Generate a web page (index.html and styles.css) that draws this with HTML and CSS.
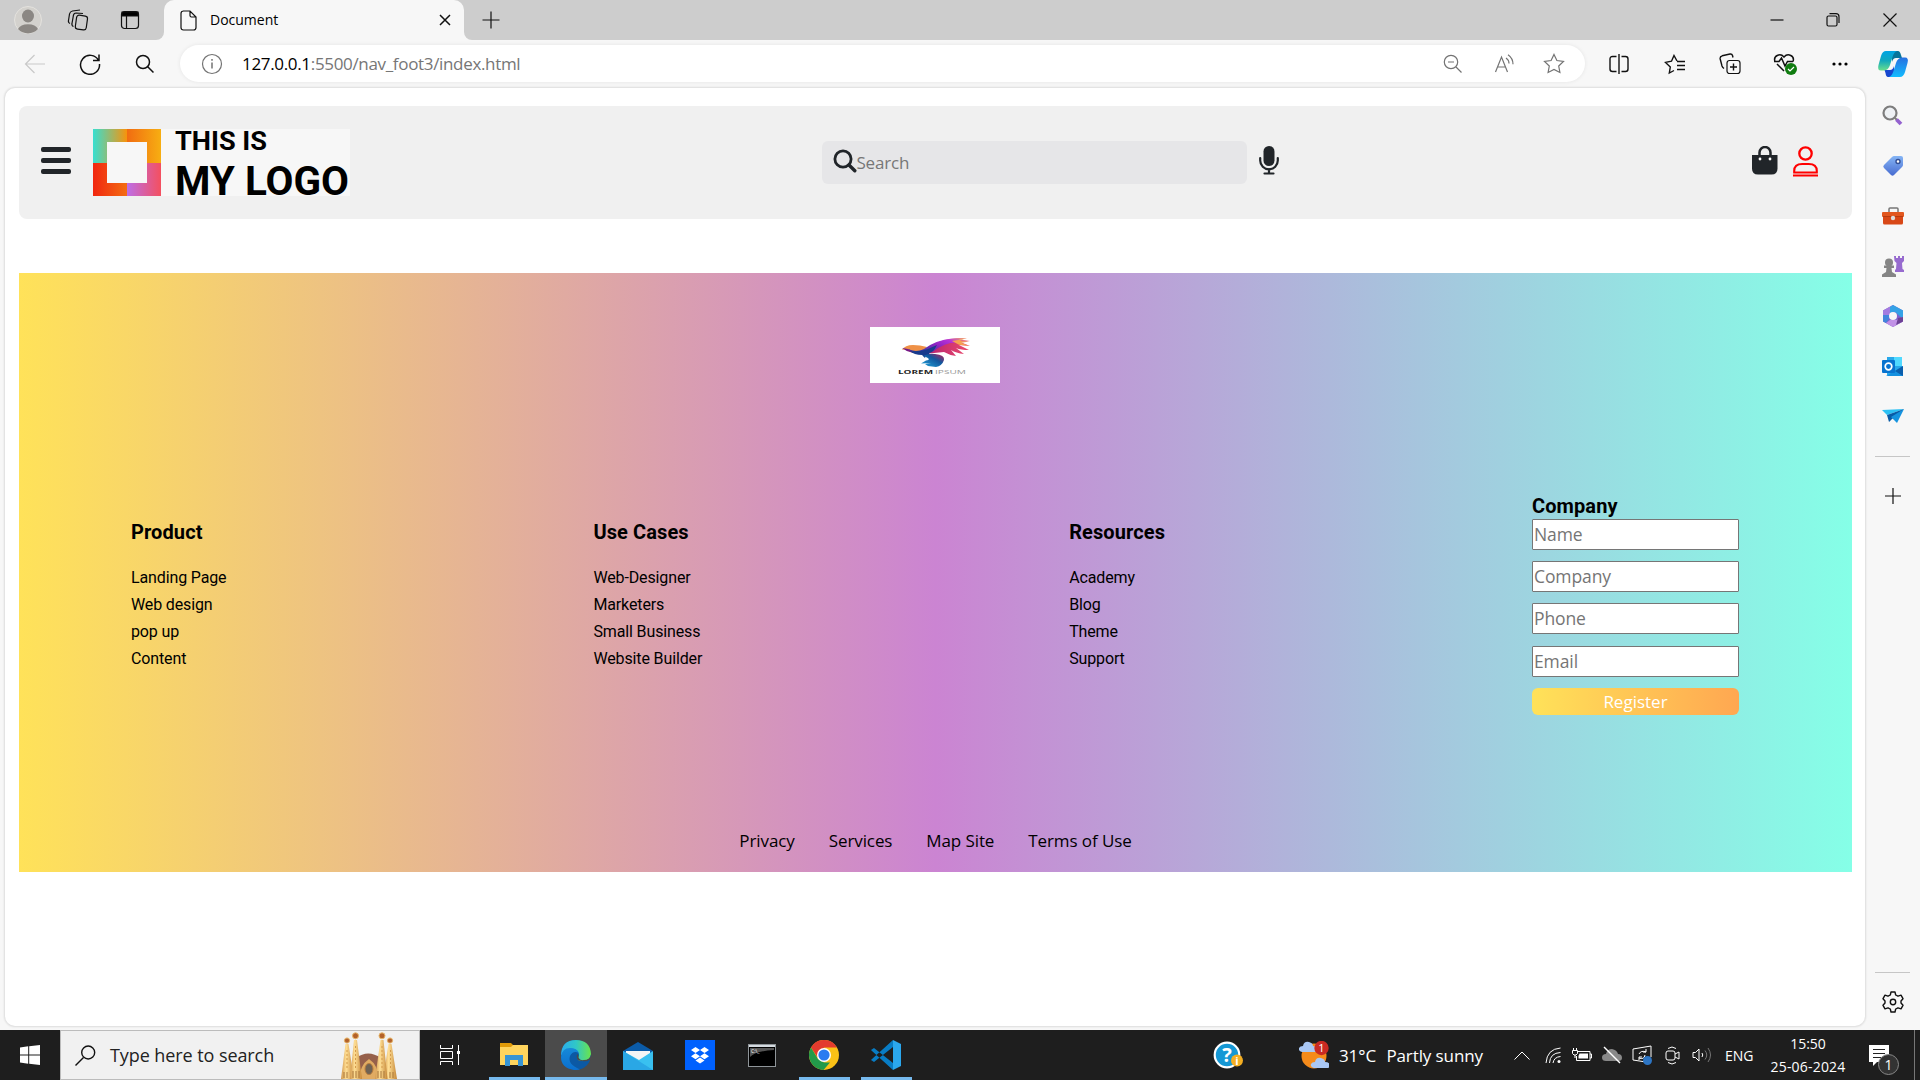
FILE: index.html
```html
<!DOCTYPE html>
<html lang="en">
<head>
<meta charset="utf-8">
<title>Document</title>
<link rel="stylesheet" href="styles.css">
</head>
<body>
<div class="titlebar">
  <div class="title-tools">
    <svg width="28" height="28"><circle cx="14" cy="14" r="13.5" fill="#d3d1cd" stroke="#e4e2de"/><ellipse cx="14" cy="10" rx="6" ry="6.5" fill="#8b8783"/><path d="M4 23a10.500 7 0 0 1 20 0a13.500 13.500 0 0 1-20 0z" fill="#8b8783"/></svg>
    <svg class="line" width="22" height="22" viewBox="0 0 22 22"><rect x="9" y="6.500" width="11" height="14" rx="2.500" transform="rotate(8 14 13)"/><path d="M6.500 17.500q-2-.7-1.500-3L6.500 6Q7 4 9 4l7 .5"/><path d="M3 14.500q-2-.8-1.500-3L2.500 5Q3 2.500 5.500 2L13 1"/></svg>
    <svg class="line" width="20" height="20" viewBox="0 0 20 20"><rect x="1.500" y="1.500" width="17" height="17" rx="3"/><path d="M2 2h16v4H2z" fill="#000"/><path d="M6.500 6v12"/></svg>
  </div>
  <div class="tab">
    <svg class="line" width="17" height="21" viewBox="0 0 17 21"><path d="M3 1h7l6 6v10.500q0 2.500-2.500 2.500h-10Q1 20 1 17.500v-14Q1 1 3.500 1M10 1v4.500Q10 7 11.500 7H16"/></svg>
    <span class="tab-name">Document</span>
    <svg class="line tab-close" width="12" height="12"><path d="M1 1l10 10M11 1L1 11" stroke-width="1.500"/></svg>
  </div>
  <div class="new-tab"><svg class="line" width="18" height="18"><path d="M9 0.500v17M.5 9h17"/></svg></div>
  <div class="window-buttons">
    <svg class="line" width="14" height="14"><path d="M.5 7h13"/></svg>
    <svg class="line" width="14" height="14"><rect x="1" y="3" width="10" height="10" rx="1.500"/><path d="M3.500 .7H10q3 0 3 3V10"/></svg>
    <svg class="line" width="14" height="14"><path d="M.5 .5l13 13M13.500 .5l-13 13"/></svg>
  </div>
</div>

<div class="toolbar">
  <div class="nav-tools">
    <svg class="line faint" width="22" height="20"><path d="M21 10H1.500M10.500 1L1.500 10l9 9"/></svg>
    <svg class="line" width="22" height="22" viewBox="0 0 22 22"><path d="M19.500 7.500A9.500 9.500 0 1 0 20.500 11M20 1.500v6h-6" stroke-width="1.500"/></svg>
    <svg class="line" width="20" height="20" viewBox="0 0 20 20"><circle cx="8" cy="8" r="6.500" stroke-width="1.500"/><path d="M12.500 12.500l6 6" stroke-width="1.500"/></svg>
  </div>
  <div class="address">
    <svg class="line gray info" width="22" height="22"><circle cx="11" cy="11" r="9.500"/><path d="M11 9.500v6M11 6v1.800" stroke-width="1.500"/></svg>
    <span class="url"><b>127.0.0.1</b>:5500/nav_foot3/index.html</span>
    <div class="address-tools">
      <svg class="line gray" width="20" height="20" viewBox="0 0 20 20"><circle cx="8" cy="8" r="6.700"/><path d="M13 13l5.500 5.500M5 8h6"/></svg>
      <svg class="line gray" width="22" height="20" viewBox="0 0 22 20"><path d="M1.500 18L7.500 3l6 15M3.500 13h8M12 4q3 2 3 5.500M14 .8q5 3.500 5 9.500"/></svg>
      <svg class="line gray" width="22" height="21" viewBox="0 0 22 21"><path d="M11 1.500l2.900 6 6.600.9-4.800 4.600 1.200 6.500-5.900-3.100-5.900 3.100L6.300 13 1.500 8.400l6.600-.9z"/></svg>
    </div>
  </div>
  <div class="browser-tools">
    <svg class="line" width="20" height="20" viewBox="0 0 20 20"><path d="M7.500 2.500H3.500Q1 2.500 1 5v10q0 2.500 2.500 2.500h4M12.500 2.500h4Q19 2.500 19 5v10q0 2.500-2.500 2.500h-4M10 0v20" stroke-width="1.400"/></svg>
    <svg class="line" width="22" height="21" viewBox="0 0 22 21"><path d="M13 7L10 1.500 7.500 7.200 1.500 8.400l4.800 4.600-1 6L10 16.500M13 7.500h8M13 11.500h8M13 15.500h8" stroke-width="1.400"/></svg>
    <svg class="line" width="22" height="22" viewBox="0 0 22 22"><rect x="8" y="7.500" width="13" height="13" rx="2.500"/><path d="M14.500 10.500v7M11 14h7M5 15.500Q3.500 14.500 3 13L1.200 6q-.5-2.500 2-3.200L11 1q2-.3 2.500 1.500L14 4.500" stroke-width="1.400"/></svg>
    <svg class="line" width="25" height="24" viewBox="0 0 25 24"><path d="M11 19L4 12M2 9.500C0 4 7 .5 11 5c4-4.500 11-1 9 4.500M1 9.500h5L8.500 6l3.500 8L14.500 9.500H20" stroke-width="1.500"/><circle cx="18" cy="17" r="6" fill="#107c10" stroke="none"/><path d="M15 17l2 2 4-4" stroke="#fff"/></svg>
    <svg width="18" height="6"><circle cx="3" cy="3" r="1.600"/><circle cx="9" cy="3" r="1.600"/><circle cx="15" cy="3" r="1.600"/></svg>
    <svg width="32" height="28" viewBox="0 0 32 28"><defs><linearGradient id="ca" x1="0" y1="0" x2="0" y2="1"><stop stop-color="#00a4e4"/><stop offset=".5" stop-color="#12a9bd"/><stop offset="1" stop-color="#69df8c"/></linearGradient><linearGradient id="cb" x1="0" y1="0" x2="0" y2="1"><stop stop-color="#2870e0"/><stop offset="1" stop-color="#13bcff"/></linearGradient></defs><path d="M15 1h6q2 0 3 4l1 3h-6q-3 0-4 4z" fill="#08759b"/><path d="M17 27h-6q-2 0-2.500-4L7.500 20H13q3 0 4-4z" fill="#1747cf"/><path d="M9 1h11q-3 1-4.500 6L13 15q-1.500 5-6 5.500H4Q0 20.500 1.500 15l2.500-9Q5.500 1 9 1z" fill="url(#ca)"/><path d="M23 27H12q3-1 4.500-6l2.500-8Q20.500 8 25 7.500h3q4 0 2.500 5.500l-2.500 9Q26.500 27 23 27z" fill="url(#cb)"/></svg>
  </div>
</div>

<div class="workspace">
  <main class="page">
    <header class="site-header">
      <div class="brand">
        <div class="menu"><i></i><i></i><i></i></div>
        <div class="logo">
          <div class="mark"><div class="q1"></div><div class="q2"></div><div class="q3"></div><div class="q4"></div></div>
          <svg class="logo-text" width="175" height="67"><text x="0" y="21" font-size="26" textLength="92" lengthAdjust="spacingAndGlyphs">THIS IS</text><text x="0" y="66" font-size="40" textLength="174" lengthAdjust="spacingAndGlyphs">MY LOGO</text></svg>
        </div>
      </div>
      <div class="finder">
        <div class="search">
          <svg width="24" height="24" viewBox="0 0 24 24" fill="none" stroke="#212529" stroke-width="2.800" stroke-linecap="round"><circle cx="10" cy="10" r="8.100"/><path d="M16 16l5.800 5.800" stroke-width="3.400"/></svg>
          <span class="search-hint">Search</span>
        </div>
        <svg width="20" height="29" viewBox="0 0 20 29"><rect x="4.500" y="0" width="11" height="20" rx="5.500" fill="#212529"/><path d="M1.200 12v2.500a8.800 8.800 0 0 0 17.600 0V12M10 23v4M5.500 27.500h9" fill="none" stroke="#212529" stroke-width="2.200" stroke-linecap="round"/></svg>
      </div>
      <div class="account">
        <svg width="26" height="29" viewBox="0 0 26 29"><path d="M7.500 10V6.500a5.500 5.500 0 0 1 11 0V10" fill="none" stroke="#212529" stroke-width="2.500"/><path d="M0 9h25.500v13.500q0 6-6 6H6q-6 0-6-6z" fill="#212529"/><circle cx="8" cy="13" r="1.400" fill="#fff"/><circle cx="18" cy="13" r="1.400" fill="#fff"/></svg>
        <svg width="25" height="31" viewBox="0 0 25 31" fill="none" stroke="#f00" stroke-width="2.300"><circle cx="12.500" cy="7.500" r="6.200"/><path d="M1.200 26.500V25q0-7 8-7h6.600q8 0 8 7v1.500zM0 29.500h25" stroke-width="2.100"/></svg>
      </div>
    </header>

    <footer class="site-footer">
      <div class="bird">
        <svg width="130" height="56" viewBox="0 0 130 56">
          <defs>
            <linearGradient id="wing" x1="0" y1=".6" x2="1" y2="0"><stop stop-color="#2a3fa0"/><stop offset=".4" stop-color="#8a22c0"/><stop offset=".7" stop-color="#b832d8"/><stop offset="1" stop-color="#ffc04f"/></linearGradient>
            <linearGradient id="under"><stop stop-color="#64158c"/><stop offset=".4" stop-color="#b82370"/><stop offset="1" stop-color="#ec4b6c"/></linearGradient>
            <linearGradient id="tail" x1="0" y1="1" x2="1" y2="0"><stop stop-color="#22a7dd"/><stop offset=".6" stop-color="#11569d"/><stop offset="1" stop-color="#c31d55"/></linearGradient>
          </defs>
          <path d="M32 23q3-5 11-5 7 0 14 2l-5 6q-10 1-14-3-4-1-6 0z" fill="#ef9147"/>
          <path d="M38 22q8 4 16 1Q68 13 82 12q7-1 15-.5-7 .5-9 1.500 6 0 12 1-5 1-10 1l10 4-11-1 10 5q-8 0-13-2l8 6q-8-1-13-4l5 6q-7-1-12-4l-10 1q-22 3-32-5z" fill="url(#under)"/>
          <path d="M38 22q8 4 16 0Q66 13 82 11.500q7-1 15 0-8 1-10 2 6 0 11 1-6 1-12 1-11 0-23 9-15 5-25-2.500z" fill="url(#wing)"/>
          <path d="M82 14l12-2-4 2 8 .8-7 1 8 3-10-1z" fill="#f6a24f"/>
          <path d="M40 24q10 1 18-2l9-4q-4 8-8 8l2 4-5-2-1 3-3-3q-8 0-12-4z" fill="#193b8c"/>
          <path d="M53 29q6-3 12-2 10 1 9 6-2 6-8 7l-8-1-3-2 6-1-10 .5 5-3q7-1-3-4.500z" fill="url(#tail)"/>
          <text x="28" y="46.500" font-size="5" font-weight="700" fill="#222" textLength="35" lengthAdjust="spacingAndGlyphs">LOREM</text><text x="65" y="46.500" font-size="5" fill="#999" textLength="31" lengthAdjust="spacingAndGlyphs">IPSUM</text>
        </svg>
      </div>
      <div class="columns">
        <section class="links"><h3>Product</h3><a>Landing Page</a><a>Web design</a><a>pop up</a><a>Content</a></section>
        <section class="links"><h3>Use Cases</h3><a>Web-Designer</a><a>Marketers</a><a>Small Business</a><a>Website Builder</a></section>
        <section class="links"><h3>Resources</h3><a>Academy</a><a>Blog</a><a>Theme</a><a>Support</a></section>
        <form class="signup"><h3>Company</h3><input placeholder="Name"><input placeholder="Company"><input placeholder="Phone"><input placeholder="Email"><button type="button">Register</button></form>
      </div>
      <nav class="legal"><a>Privacy</a><a>Services</a><a>Map Site</a><a>Terms of Use</a></nav>
    </footer>
  </main>

  <aside class="sidebar">
    <div class="apps">
      <svg width="22" height="22" viewBox="0 0 22 22"><circle cx="8" cy="8" r="6.500" fill="#eef1f4" stroke="#7d7d7d" stroke-width="2.200"/><path d="M13 13l2 2" stroke="#7d7d7d" stroke-width="2"/><path d="M14.500 14.500l4.500 4.500" stroke="#9462cf" stroke-width="3.800"/></svg>
      <svg width="22" height="22" viewBox="0 0 22 22"><defs><linearGradient id="tg" x1="0" y1="0" x2="0" y2="1"><stop stop-color="#85b5f5"/><stop offset="1" stop-color="#476bd0"/></linearGradient></defs><path d="M12 1h7q2 0 2 2v7q0 1-1 2l-8 8q-1.500 1.500-3 0l-7-7q-1.500-1.500 0-3l8-8q1-1 2-1z" fill="url(#tg)"/><circle cx="16" cy="6.500" r="2" fill="#fff" stroke="#344f94" stroke-width="1.400"/></svg>
      <svg width="22" height="18" viewBox="0 0 22 18"><path d="M7 6V2q0-1 1-1h7q1 0 1 1v4" fill="none" stroke="#777" stroke-width="1.500"/><rect x="1" y="8" width="20" height="9.500" rx="1.500" fill="#d84817"/><rect y="5" width="22" height="5" rx="1" fill="#e2571f"/><path d="M1 9h20v1H1z" fill="#b73b10"/><circle cx="11" cy="11" r="2.200" fill="#ddd"/></svg>
      <svg width="22" height="23" viewBox="0 0 22 23"><path d="M12 1h2v2h2V1h2v2h2V1h2v5l-2 2 .5 6 1.500 1v2h-9v-2l1-1 .5-6-2-2z" fill="#976bcf"/><g fill="#858585"><circle cx="7" cy="7.500" r="4"/><path d="M2 10.500h10V13H9.500l.5 4 4 2.500V22H0v-2.500L4 17l.5-4H2z"/></g></svg>
      <svg width="22" height="22" viewBox="0 0 22 22"><path d="M11 0L1 5.500v11L11 22l10-5.500v-11z" fill="#7d62cf"/><path d="M11 0L1 5.500V11l6 0 1.500-4L14 6z" fill="#a37be0"/><path d="M11 0L8 2v6l5-1 8 7V5.500z" fill="#35a2e6"/><path d="M1 10l6 0v4l-3 4-3-1.500z" fill="#4385dc"/><path d="M4 18l4-3h6l7-3v4.500L11 22z" fill="#c191e6"/><path d="M21 12v4.500L14 20l2-7z" fill="#6d4295"/><circle cx="11" cy="11" r="4" fill="#f7f7f7"/></svg>
      <svg width="21" height="21" viewBox="0 0 21 21"><path d="M5 1h15v18H5z" fill="#28a8ea"/><path d="M12 1h8v9h-8z" fill="#50d9ff"/><path d="M4 20h17V10z" fill="#1490df"/><path d="M21 10v10l-8-5z" fill="#0a5eac"/><rect x="0" y="4" width="13" height="13" rx="1" fill="#0873cf"/><circle cx="6.500" cy="10.500" r="3.300" fill="none" stroke="#fff" stroke-width="1.700"/></svg>
      <svg width="22" height="16" viewBox="0 0 22 16"><path d="M0 2L22 1 5 7z" fill="#2cc1f4"/><path d="M22 1L5 7l2 7 3-3z" fill="#085ba6"/><path d="M22 1L9 9l6 6z" fill="#1593df"/></svg>
    </div>
    <hr>
    <svg class="line add" width="16" height="16"><path d="M8 0v16M0 8h16"/></svg>
    <hr class="low">
    <svg class="line gear" width="22" height="22" viewBox="0 0 22 22"><path d="M9 1h4l.7 3 2.300 1.200 3-1 2 3.500L19 10v2l2 2.300-2 3.500-3-1-2.300 1.200L13 21H9l-.7-3L6 16.800l-3 1-2-3.500L3 12v-2L1 7.700l2-3.500 3 1L8.300 4z" stroke-width="1.400" stroke-linejoin="round"/><circle cx="11" cy="11" r="2.700" stroke-width="1.400"/></svg>
  </aside>
</div>

<div class="taskbar">
  <div class="start"><svg width="20" height="20" viewBox="0 0 20 20" fill="#fff"><path d="M0 2.500L8.200 1.300V9.500H0zM9.200 1.200L20 0v9.500H9.200zM0 10.500h8.200v8.200L0 17.600zM9.200 10.500H20V20L9.200 18.800z"/></svg></div>
  <div class="task-search">
    <svg class="line" width="21" height="21" viewBox="0 0 21 21"><circle cx="13.200" cy="7.500" r="6.500" stroke-width="1.400"/><path d="M8.500 12.500l-8 8" stroke-width="1.400"/></svg>
    <span>Type here to search</span>
    <svg class="church" width="56" height="47" viewBox="0 0 56 47"><defs><linearGradient id="gold"><stop stop-color="#d0954a"/><stop offset=".4" stop-color="#ffdf95"/><stop offset="1" stop-color="#c58637"/></linearGradient></defs><path d="M15 47V26q12-9 25 0v21z" fill="#96604a"/><path d="M18 47q1-14 10-20 9 6 10 20z" fill="#e0ab62"/><ellipse cx="28" cy="37" rx="4" ry="5.500" fill="#6f6253" stroke="#b77c3e"/><path d="M0 47L4.500 12h3L13 47z" fill="url(#gold)"/><path d="M42 47l5.500-35h3L56 47z" fill="url(#gold)"/><path d="M9 47l4-39h3l5 39z" fill="url(#gold)"/><path d="M34 47l5.500-39h3l4 39z" fill="url(#gold)"/><path d="M3 46v-6m3 6v-6m6 6v-7m3 7v-7m3 7v-7m19 7v-7m3 7v-7m3 7v-7m6 7v-6m3 6v-6" stroke="#a9763b"/><path d="M14.500 36V14M41 36V14M6 36V18M49.500 36V18" stroke="#d59b4c" stroke-dasharray="2 2"/><g fill="#b3622b" stroke="#e7b66a"><circle cx="6" cy="8.500" r="2.600"/><circle cx="14.500" cy="3.800" r="3"/><circle cx="41" cy="3.800" r="3"/><circle cx="49" cy="8.500" r="2.600"/></g></svg>
  </div>
  <div class="start"><svg width="20" height="20" viewBox="0 0 20 20" fill="none" stroke="#fff"><path d="M.5 0v3.500h12V0M.5 20v-3.500h12V20M.5 6.500h12v7H.5zM18.500 0v20"/><path d="M17 6h3v3h-3z" fill="#fff" stroke="none"/></svg></div>
  <div class="task-apps">
    <div class="app open"><svg width="28" height="24" viewBox="0 0 28 24"><path d="M0 0h11l3 3v3H0z" fill="#e09a08"/><path d="M0 4h11l2-2h15v20H0z" fill="#ffd45d"/><path d="M5 23V12h18v11h-5v-6h-8v6z" fill="#3794d4"/></svg></div>
    <div class="app open current"><svg width="30" height="30" viewBox="0 0 30 30"><defs><linearGradient id="e1"><stop stop-color="#29abed"/><stop offset=".5" stop-color="#30c7c7"/><stop offset="1" stop-color="#6be44a"/></linearGradient><linearGradient id="e2" x1="0" y1="0" x2="0" y2="1"><stop stop-color="#1689d8"/><stop offset="1" stop-color="#0b6fce"/></linearGradient></defs><circle cx="15" cy="15" r="15" fill="#0c59a4"/><path d="M30 14Q29 21 21 21q-5 0-4-3 2-3 0-6-3-4-9-3-6 1-8 7Q0 0 15 0q14 0 15 14z" fill="url(#e1)"/><path d="M0 17q1-9 9-9 7 0 9 5-6-3-9 3-3 8 10 13.500Q15 30 13 30 0 28 0 17z" fill="url(#e2)"/><path d="M30 15v6l-2-1q-2 2-7 1-5 0-5-3-1-3 1-4 0 7 6 6 6 0 7-5z" fill="#4b4b4b"/></svg></div>
    <div class="app"><svg width="30" height="29" viewBox="0 0 30 29"><path d="M0 10L15 1l15 9-4 4H4z" fill="#0b5ba8"/><path d="M3 10h24v12H3z" fill="#f5f5f5"/><path d="M0 10l16 9 14-9v19H0z" fill="#39c0f0"/><path d="M0 10l30 19H0z" fill="#2aa7e5"/></svg></div>
    <div class="app"><svg width="30" height="30" viewBox="0 0 30 30"><path d="M0 0h30v30H0z" fill="#0061fe"/><path d="M10.500 7L15 10l-4.500 3L6 10zm9 0l4.500 3-4.500 3-4.500-3zm-9 6.200L15 16.200l-4.500 3L6 16.200zm9 0l4.500 3-4.500 3-4.500-3zM15 17.500l4.500 3-4.500 3-4.500-3z" fill="#fff"/></svg></div>
    <div class="app"><svg width="28" height="23" viewBox="0 0 28 23"><rect x=".5" y=".5" width="27" height="22" fill="#000" stroke="#8f9599"/><path d="M1 1h26v2H1z" fill="#d5dbe0"/><path d="M2 4h24v2Q8 7 2 13z" fill="#555"/><text x="3" y="9" font-size="5" fill="#fff">C:\_</text></svg></div>
    <div class="app open"><svg width="30" height="30" viewBox="0 0 30 30"><circle cx="15" cy="15" r="15" fill="#fbc116"/><path d="M2 7.500A15 15 0 0 1 28 7.500H15L9 18z" fill="#e33b2e"/><path d="M2 7.500L9 19l6 3.500h6L14.500 30A15 15 0 0 1 2 7.500z" fill="#229a4a"/><circle cx="15" cy="15" r="7" fill="#fff"/><circle cx="15" cy="15" r="5.600" fill="#2c7cf0"/></svg></div>
    <div class="app open"><svg width="30" height="30" viewBox="0 0 30 30"><path d="M0 10l3-2 19 15v7L1 11zM0 20l3 2L22 7V0L1 19z" fill="#087cc4"/><path d="M22 0l8 4v22l-8 4z" fill="#2ba7ed"/></svg></div>
  </div>
  <div class="tray">
    <svg class="help" width="30" height="30" viewBox="0 0 30 30"><circle cx="14" cy="15" r="12.300" fill="#1598d5" stroke="#fff" stroke-width="2.200"/><text x="14" y="22" font-size="20" font-weight="700" text-anchor="middle" fill="#fff">?</text><circle cx="24" cy="20.500" r="6" fill="#f4ae22"/><text x="24" y="25" font-size="11" font-weight="700" text-anchor="middle" fill="#fff">i</text></svg>
    <svg class="weather" width="30" height="29" viewBox="0 0 30 29"><circle cx="15" cy="15" r="12.500" fill="#f58b1b"/><path d="M3 11q-4-1-3-4 1-2 4-2 1-5 6-4 4 1 4 4 5 1 4 4 0 2-3 2zM15 27q-4-1-3-4 1-2 4-2 1-5 6-4 4 1 4 4 4 0 5 3 0 3-3 3z" fill="#a9c7f4"/><circle cx="22.500" cy="7" r="7.200" fill="#c92a23"/><text x="22.500" y="11" font-size="11" fill="#fff" text-anchor="middle">1</text></svg>
    <span class="forecast"><span>31°C</span><span>Partly sunny</span></span>
    <svg class="chevron" width="16" height="9"><path d="M.5 8.500L8 1l7.500 7.500"/></svg>
    <svg class="wifi" width="16" height="17" viewBox="0 0 16 17"><path d="M1 16Q2 2 15.500 1M4.500 16Q5 6 15.500 5.500M8 16q1-6 7.500-6.500"/><circle cx="14" cy="14.500" r="1.500" fill="#fff" stroke="none"/></svg>
    <svg class="battery" width="20" height="15" viewBox="0 0 20 15"><path d="M5 3.500h13v9H4.500V8M18 6h1.500v4H18M.5 2.500h5v3L4 7H2L.5 5.500zM1.500 0v2M4.500 0v2M3 7v3"/><path d="M7.500 5.500h8.500v5H6.500V8z" fill="#fff" stroke="none"/></svg>
    <svg class="cloud" width="20" height="18" viewBox="0 0 20 18"><path d="M4 15q-4 0-4-3.500T4 8q1-5 6-5 5 1 6 5 4 0 4 4 0 3-4 3z" fill="#888" stroke="none"/><path d="M2 1l16 16" stroke-width="1.400"/></svg>
    <svg class="sync" width="21" height="21" viewBox="0 0 21 21"><path d="M14 17L1 15V4l18-3v11M7 9q2-4 7-2M14 4v3h-3M13 10q-1 5-6 3M7 15v-3h3"/><circle cx="15.500" cy="15.500" r="4.500" fill="#2d75c4" stroke="none"/></svg>
    <svg class="camera" width="16" height="19" viewBox="0 0 16 19"><rect x="1" y="5" width="9" height="9" rx="2"/><path d="M10 8l4-2v7l-4-2M3 2.500q4-3 8 0M3 16.500q4 3 8 0"/></svg>
    <svg class="speaker" width="20" height="18" viewBox="0 0 20 18"><path d="M1 6.500h2.500L7 3v12l-3.500-3.500H1zM10 7q1.500 2 0 4"/><path d="M13 4.500q3.500 4.500 0 9M16 2q5 7 0 14" stroke="#777"/></svg>
    <span class="lang">ENG</span>
    <div class="clock"><span>15:50</span><span class="date">25-06-2024</span></div>
    <svg class="notice" width="31" height="31" viewBox="0 0 31 31"><path d="M0 0h20v17H8l-4 4v-4H0z" fill="#fff" stroke="none"/><path d="M4 4.500h12M4 8.500h12M4 12.500h8" stroke="#222"/><circle cx="19.500" cy="19.500" r="10" fill="#333" stroke="#888"/><text x="19.500" y="25" font-size="14" text-anchor="middle" fill="#fff">1</text></svg>
    <i class="edge"></i>
  </div>
</div>
</body>
</html>
```

FILE: styles.css
```css
* { box-sizing: border-box; }
body { margin: 0; width: 1920px; height: 1080px; overflow: hidden; display: flex; flex-direction: column; background: #f7f7f7; font-family: "Open Sans", "Noto Sans", sans-serif; }
svg { display: block; flex: none; }
.line { fill: none; stroke: #111; stroke-width: 1.2; }
.gray { stroke: #737373; }
.faint { stroke: #c9c9c9; }

/* Browser frame */
.titlebar { height: 40px; flex: none; display: flex; background: linear-gradient(#cdcdcd, #cdcdcd) top / 100% 20px no-repeat, linear-gradient(90deg, #cdcdcd 150px, #f7f7f7 150px 478px, #cdcdcd 478px); }
.title-tools { width: 164px; display: grid; grid-template-columns: 56px 43px 62px; place-items: center; background: #cdcdcd; border-bottom-right-radius: 8px; }
.tab { width: 300px; display: flex; align-items: center; padding: 0 13px 0 16px; background: #f7f7f7; border-radius: 10px 10px 0 0; }
.tab-name { margin: -2px 0 0 13px; font-size: 14px; }
.tab-close { margin-left: auto; }
.new-tab { width: 53px; display: grid; place-items: center; background: #cdcdcd; border-bottom-left-radius: 8px; }
.window-buttons { margin-left: auto; display: grid; grid-template-columns: 58px 54px 60px; place-items: center; }
.toolbar { height: 48px; flex: none; display: flex; align-items: center; }
.nav-tools { display: grid; grid-template-columns: 54px 56px 54px; place-items: center; padding-left: 8px; width: 180px; }
.address { width: 1405px; height: 37px; margin-bottom: 1px; display: flex; align-items: center; padding: 0 6px 0 21px; border-radius: 19px; background: #fff; box-shadow: 0 0 4px #00000014; }
.url { margin-left: 19px; font-size: 17px; letter-spacing: -.33px; color: #767676; }
.url b { font-weight: 400; color: #000; }
.address-tools { margin-left: auto; display: grid; grid-template-columns: 56px 48px 50px; place-items: center; }
.browser-tools { margin-left: 6px; display: grid; grid-template-columns: 56px 56px 54px 56px 54px 52px; place-items: center; }

/* Page */
.workspace { height: 942px; flex: none; display: flex; padding-left: 5px; }
.page { width: 1860px; height: 938px; padding: 18px 13px 0 14px; border-radius: 10px; background: #fff; box-shadow: 0 0 2px 1px #0000001c; }
.site-header { height: 113px; display: flex; align-items: center; justify-content: space-between; padding: 0 34px 0 22px; border-radius: 8px; background: #f0f0f0; }
.brand { display: flex; align-items: center; gap: 22px; }
.menu { width: 30px; display: grid; gap: 6px; margin-bottom: 5px; }
.menu i { height: 5px; border-radius: 2px; background: #212529; }
.logo { width: 257px; height: 67px; display: flex; gap: 14px; background: #f7f7f7; }
.mark { position: relative; width: 68px; flex: none; display: grid; grid-template-columns: 1fr 1fr; }
.mark::after { content: ""; position: absolute; inset: 13px 14px; background: #f7f7f7; }
.q1 { background: linear-gradient(90deg, #38dfd0, #f8930b); }
.q2 { background: linear-gradient(90deg, #f16c11, #f7ae12); }
.q3 { background: linear-gradient(90deg, #f1260f, #f36d12); }
.q4 { background: linear-gradient(90deg, #bd6ee7, #f4505f); }
.logo-text { overflow: visible; font-family: Roboto, sans-serif; font-weight: 700; }
.finder { display: flex; align-items: center; gap: 12px; margin-right: 2px; }
.finder > svg { margin-bottom: 4px; }
.search { width: 425px; height: 43px; display: flex; align-items: center; padding-left: 11px; border-radius: 6px; background: #e6e6e8; }
.search > svg { margin-bottom: 3px; }
.search-hint { color: #777; font-size: 17px; letter-spacing: -.2px; }
.account { display: flex; align-items: flex-start; gap: 15px; margin-bottom: 2px; }
.site-footer { height: 599px; margin-top: 54px; display: flex; flex-direction: column; background: linear-gradient(90deg, #ffe259, #cb84d2 50%, #85ffe7); }
.bird { width: 130px; height: 56px; margin: 54px 0 0 851px; background: #fff; }
.columns { height: 225px; margin-top: 110px; padding: 0 113px 0 112px; display: flex; justify-content: space-between; font-family: Roboto, sans-serif; }
.columns h3 { margin: 0; font-size: 20px; line-height: 26px; font-weight: 700; letter-spacing: .1px; }
.links { display: flex; flex-direction: column; padding-top: 26px; }
.links h3 { margin-bottom: 19px; }
.links a { font-size: 16px; line-height: 27px; letter-spacing: -.13px; }
.signup { width: 207px; display: flex; flex-direction: column; }
.signup input { width: 100%; height: 31px; flex: none; margin: 0 0 11px; padding: 0 1px 2px; border: 1px solid #767676; border-radius: 1px; background: #fff; font: 17.5px "Open Sans", sans-serif; letter-spacing: -.1px; }
.signup input:nth-of-type(3) { margin-bottom: 12px; }
.signup input::placeholder { color: #757575; }
.signup button { height: 27px; flex: none; margin: 0; padding: 0; border: 0; border-radius: 6px; color: #fff; background: linear-gradient(90deg, #ffe259, #ffa751); font: 17px/27px "Open Sans", sans-serif; }
.legal { margin-top: 107px; display: flex; justify-content: center; gap: 34px; font-size: 17px; line-height: 32px; letter-spacing: -.1px; }
.sidebar { width: 55px; display: flex; flex-direction: column; align-items: center; padding-top: 3px; }
.apps { display: grid; grid-auto-rows: 50px; place-items: center; }
.sidebar hr { width: 35px; height: 1px; margin: 15px 0 0; border: 0; background: #c6c6c6; }
.add { margin-top: 31px; }
.sidebar .low { margin-top: auto; }
.gear { margin: 18px 0 17px; }

/* Taskbar */
.taskbar { height: 50px; flex: none; display: flex; background: #1e1e1e; color: #fff; }
.start { width: 60px; display: grid; place-items: center; }
.task-search { width: 360px; display: flex; align-items: center; padding: 0 22px 0 14px; border: 1px solid #bcbcbc; background: #f1f1f1; color: #222; font-size: 18px; }
.task-search span { margin-left: 14px; white-space: nowrap; letter-spacing: -.08px; }
.church { margin-left: auto; align-self: flex-end; }
.task-apps { display: grid; grid-template-columns: repeat(7, 62px); margin-left: 3px; }
.app { display: flex; flex-direction: column; align-items: center; justify-content: center; }
.open { background: linear-gradient(#76b9ed, #76b9ed) center bottom / 51px 3px no-repeat; }
.current { background: linear-gradient(#76b9ed, #76b9ed) center bottom / 100% 3px no-repeat, #4b4b4b; }
.tray { margin-left: auto; display: flex; align-items: center; white-space: nowrap; }
.tray svg { fill: none; stroke: #fff; }
.tray .help, .tray .weather, .tray text { stroke: none; }
.weather { margin-left: 56px; }
.forecast { width: 144px; margin-left: 10px; display: flex; justify-content: space-between; font-size: 17px; letter-spacing: -.1px; }
.chevron { margin-left: 31px; }
.wifi { margin-left: 15px; }
.battery { margin-left: 11px; }
.cloud, .sync { margin-left: 10px; }
.camera { margin-left: 12px; }
.speaker { margin-left: 11px; }
.lang { width: 28px; margin-left: 13px; font-size: 14px; }
.clock { width: 88px; margin-left: 11px; display: grid; align-content: center; text-align: center; font-size: 14px; line-height: 23px; }
.date { letter-spacing: .2px; }
.notice { margin-left: 17px; margin-top: 10px; }
.edge { width: 1px; height: 50px; margin: 0 5px 0 14px; background: #777; }
```
